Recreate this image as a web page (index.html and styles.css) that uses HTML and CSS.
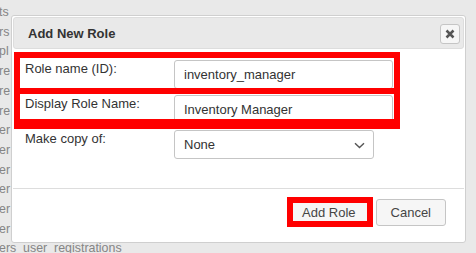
FILE: index.html
```html
<!DOCTYPE html>
<html lang="en">
<head>
<meta charset="utf-8">
<title>Add New Role</title>
<link rel="stylesheet" href="styles.css">
</head>
<body>
<div class="page">
  <ul class="table-list">
    <li>ts</li>
    <li>rs</li>
    <li>pl</li>
    <li>re</li>
    <li>re</li>
    <li>re</li>
    <li>er</li>
    <li>er</li>
    <li>er</li>
    <li>er</li>
    <li>er</li>
    <li>er</li>
    <li>ers_user_registrations</li>
  </ul>
</div>

<div class="dialog" role="dialog" aria-labelledby="dlg-title">
  <div class="titlebar">
    <span class="title" id="dlg-title">Add New Role</span>
    <button class="close" type="button" aria-label="Close">
      <svg width="10" height="10" viewBox="0 0 10 10" aria-hidden="true">
        <path d="M1.5 1.5 L8.5 8.5 M8.5 1.5 L1.5 8.5" stroke="#555" stroke-width="2.5" stroke-linecap="butt" fill="none"/>
      </svg>
    </button>
  </div>
  <div class="content">
    <div class="form-row">
      <label class="label" for="role-id">Role name (ID):</label>
      <input class="field" id="role-id" type="text" value="inventory_manager">
    </div>
    <div class="form-row">
      <label class="label" for="role-name">Display Role Name:</label>
      <input class="field" id="role-name" type="text" value="Inventory Manager">
    </div>
    <div class="form-row">
      <span class="label">Make copy of:</span>
      <div class="select">
        <span>None</span>
        <svg class="chevron" width="11" height="7" viewBox="0 0 11 7" aria-hidden="true">
          <path d="M1 1.2 L5.5 5.6 L10 1.2" stroke="#555" stroke-width="1.4" fill="none"/>
        </svg>
      </div>
    </div>
  </div>
  <div class="footer">
    <button class="btn" type="button">Add Role</button>
    <button class="btn" type="button">Cancel</button>
  </div>
</div>

<div class="mark mark-id"></div>
<div class="mark mark-name"></div>
<div class="mark mark-add"></div>
</body>
</html>
```

FILE: styles.css
```css
* {
  box-sizing: border-box;
}

html, body {
  margin: 0;
  padding: 0;
}

body {
  width: 476px;
  height: 253px;
  overflow: hidden;
  background: #e9e9e9;
  font-family: "Liberation Sans", Arial, sans-serif;
  position: relative;
}

.page {
  padding-top: 3px;
}

.table-list {
  list-style: none;
  margin: 0 0 0 -1px;
  padding: 0;
  font-size: 12.4px;
  line-height: 19.7px;
  color: #858585;
  white-space: nowrap;
}

.dialog {
  position: absolute;
  left: 11px;
  top: 15px;
  width: 455px;
  height: 228px;
  background: #fff;
  border: 1px solid #cfcfcf;
  border-radius: 3px;
  padding: 1px;
  display: flex;
  flex-direction: column;
}

.titlebar {
  position: relative;
  height: 32px;
  flex: none;
  background: #e9e9e9;
  border: 1px solid #dddddd;
  border-radius: 3px;
  display: flex;
  align-items: center;
  padding-left: 14px;
}

.title {
  font-size: 13px;
  font-weight: bold;
  color: #333;
}

.close {
  position: absolute;
  right: 3px;
  top: 6px;
  width: 20px;
  height: 20px;
  padding: 0;
  margin: 0;
  background: #f6f6f6;
  border: 1px solid #c5c5c5;
  border-radius: 3px;
  display: flex;
  align-items: center;
  justify-content: center;
}

.content {
  flex: 1;
  padding: 11px 0 0 12px;
  display: flex;
  flex-direction: column;
  gap: 6px;
}

.form-row {
  display: grid;
  grid-template-columns: 149px auto;
  align-items: start;
}

.label {
  font-size: 13px;
  line-height: 15px;
  color: #333;
  padding-top: 1px;
}

.field {
  width: 219px;
  height: 29px;
  margin: 0;
  border: 1px solid #c5c5c5;
  border-radius: 3px;
  background: #fff;
  padding: 0 9px;
  font-family: "Liberation Sans", Arial, sans-serif;
  font-size: 13px;
  color: #333;
  outline: none;
}

.select {
  width: 200px;
  height: 29px;
  border: 1px solid #c5c5c5;
  border-radius: 3px;
  background: #fff;
  padding: 0 8px 0 9px;
  display: flex;
  align-items: center;
  justify-content: space-between;
  font-size: 13px;
  color: #333;
}

.chevron {
  margin-top: 1px;
}

.footer {
  flex: none;
  border-top: 1px solid #dddddd;
  padding: 10px 18px 15px 0;
  display: flex;
  justify-content: flex-end;
  gap: 5px;
}

.btn {
  height: 27px;
  margin: 0;
  padding: 0 14px;
  background: #f6f6f6;
  border: 1px solid #c5c5c5;
  border-radius: 3px;
  font-family: "Liberation Sans", Arial, sans-serif;
  font-size: 13px;
  color: #454545;
}

.mark {
  position: absolute;
  border: 6px solid #ff0000;
  pointer-events: none;
}

.mark-id {
  left: 14px;
  top: 52px;
  width: 386px;
  height: 42px;
}

.mark-name {
  left: 14px;
  top: 88px;
  width: 386px;
  height: 41px;
  border-bottom-width: 10px;
}

.mark-add {
  left: 287px;
  top: 197px;
  width: 86px;
  height: 30px;
}
```
